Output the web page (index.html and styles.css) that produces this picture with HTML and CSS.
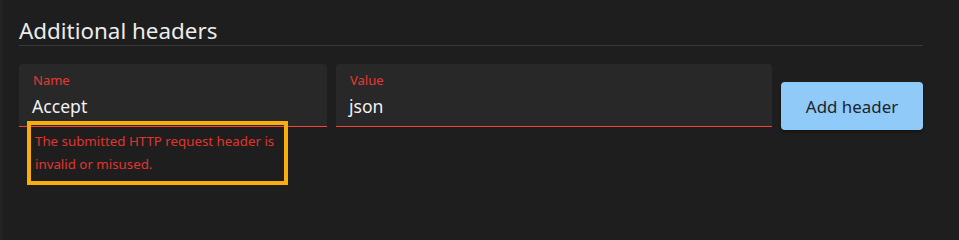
FILE: index.html
```html
<!DOCTYPE html>
<html lang="en">
<head>
<meta charset="utf-8">
<title>Additional headers</title>
<link rel="stylesheet" href="styles.css">
</head>
<body>
<section class="panel">
  <h2 class="title">Additional headers</h2>
  <div class="row">
    <div class="field field-name">
      <div class="box">
        <label class="label">Name</label>
        <div class="value">Accept</div>
      </div>
      <div class="error-wrap">
        <p class="error">The submitted HTTP request header is invalid or misused.</p>
        <div class="highlight"></div>
      </div>
    </div>
    <div class="field field-value">
      <div class="box">
        <label class="label">Value</label>
        <div class="value">json</div>
      </div>
    </div>
    <button class="btn">Add header</button>
  </div>
</section>
</body>
</html>
```
FILE: styles.css
```css
html, body {
  margin: 0;
  padding: 0;
  background: #1e1e1e;
  height: 100%;
}
body {
  font-family: "Noto Sans", "Open Sans", sans-serif;
  border-left: 3px solid #232323;
  box-sizing: border-box;
}
.panel {
  padding: 16px 36px 0 16px;
}
.title {
  margin: 0;
  font-size: 22.4px;
  font-weight: 400;
  line-height: 29px;
  color: #ececec;
  padding-bottom: 0;
  border-bottom: 1px solid #3a3a3a;
}
.row {
  display: flex;
  align-items: flex-start;
  gap: 9px;
  margin-top: 18px;
}
.field-name { width: 308px; flex: none; }
.field-value { flex: 1; }
.box {
  background: #282828;
  border-radius: 4px 4px 0 0;
  border-bottom: 1px solid #f44336;
  height: 63px;
  box-sizing: border-box;
  padding: 7px 14px 0 14px;
}
.label {
  display: block;
  font-size: 13px;
  line-height: 18px;
  color: #e53935;
}
.value {
  font-size: 17.6px;
  line-height: 26px;
  margin-top: 4px;
  color: #f2f2f2;
  margin-left: -1px;
}
.error-wrap {
  position: relative;
  padding: 3px 14px 0 16px;
}
.error {
  margin: 0;
  font-size: 13.3px;
  line-height: 23px;
  color: #e0352f;
}
.highlight {
  position: absolute;
  left: 8px;
  top: -6px;
  width: 261px;
  height: 64px;
  box-sizing: border-box;
  border: 4px solid #f9ae0c;
}
.btn {
  flex: none;
  width: 142px;
  height: 48px;
  margin-top: 18px;
  border: none;
  border-radius: 4px;
  background: #90caf9;
  color: #1f2428;
  font-family: inherit;
  font-size: 16.9px;
  box-shadow: 0 2px 3px rgba(0,0,0,0.35);
  cursor: pointer;
}
```
